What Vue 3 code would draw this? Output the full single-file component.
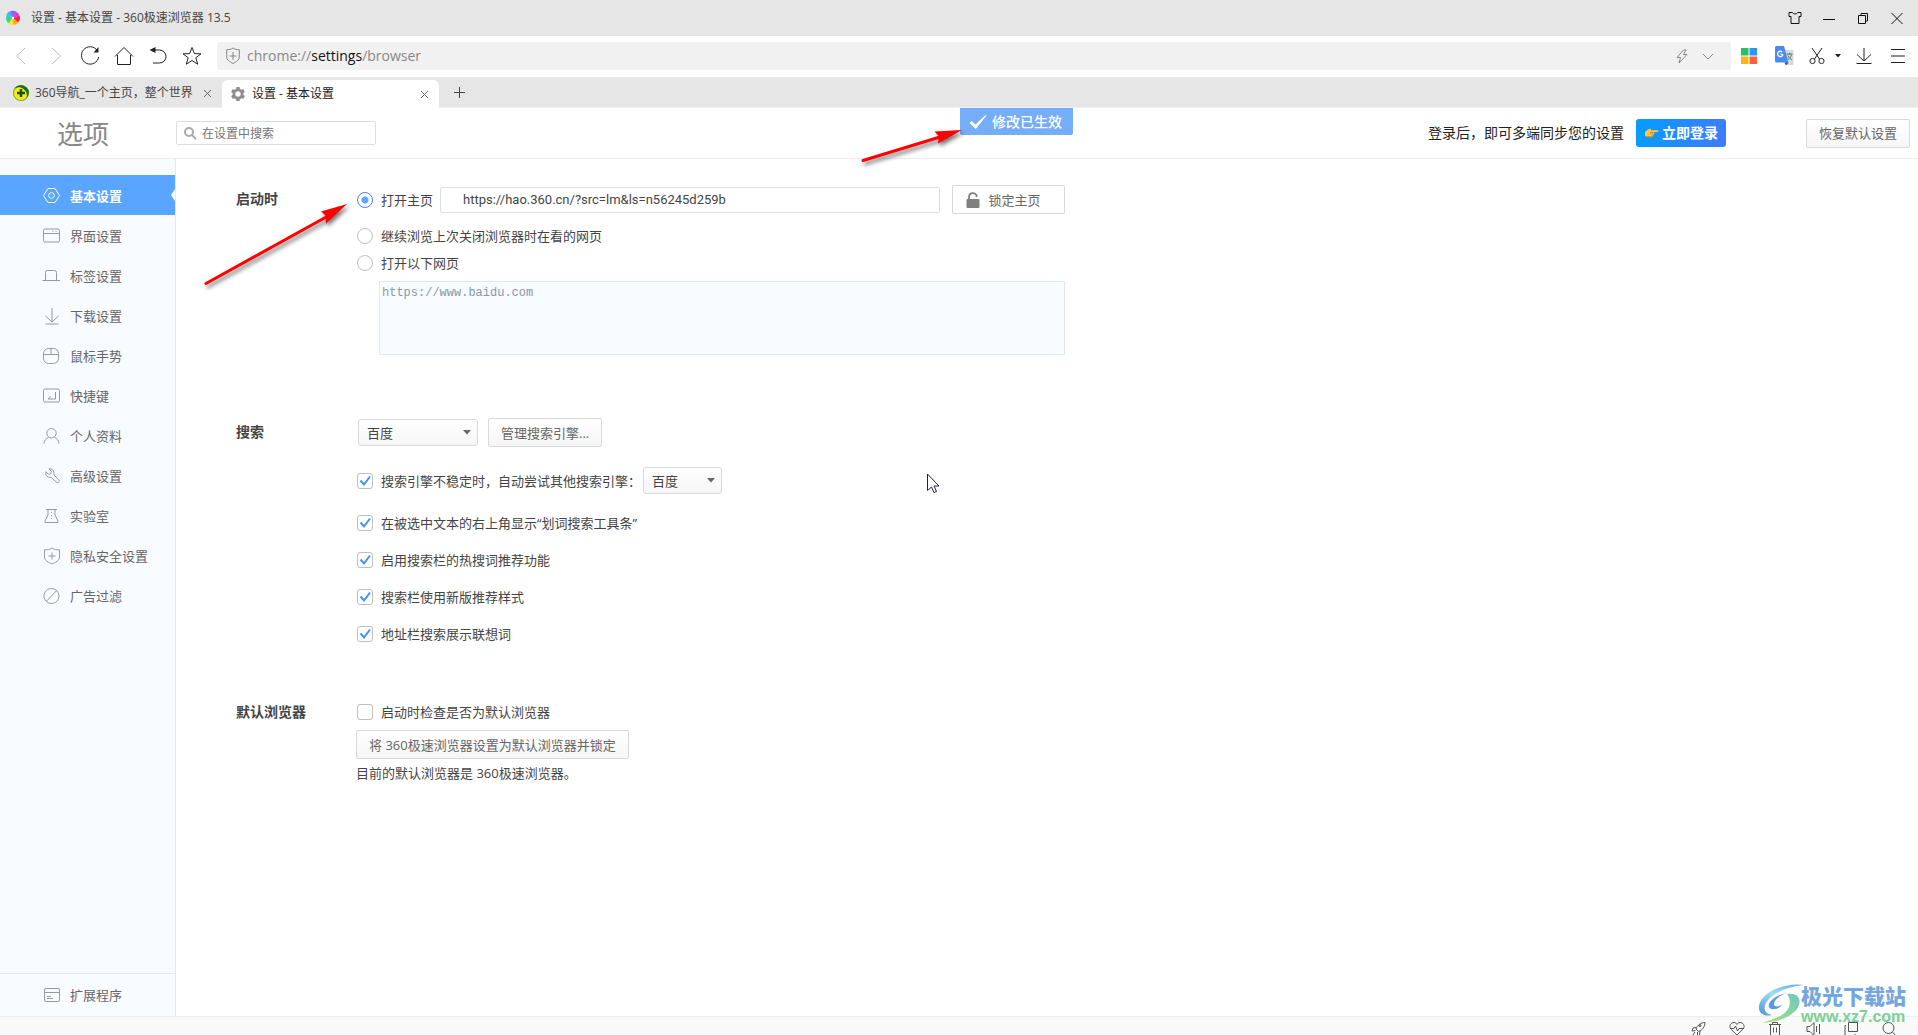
<script setup>
import { ref } from 'vue'

const navItems = [
  { id: 'basic', label: '基本设置', icon: ['M5 1.500h7l4.500 7-4.500 7H5L.5 8.500z', 'M8.500 5.700a2.800 2.800 0 1 0 .01 0z'] },
  { id: 'ui', label: '界面设置', icon: ['M2 2h13a1.500 1.500 0 0 1 1.500 1.500v10a1.500 1.500 0 0 1-1.500 1.500H2A1.500 1.500 0 0 1 .5 13.500v-10A1.500 1.500 0 0 1 2 2z', 'M.5 6.500h16', 'M9.500 4.300h1M12.500 4.300h1'] },
  { id: 'tabs', label: '标签设置', icon: ['M-.5 13.500h17.500', 'M2.500 13.500V5.500a2 2 0 0 1 2-2h7a2 2 0 0 1 2 2v8'] },
  { id: 'download', label: '下载设置', icon: ['M9 1v14', 'M2.500 9L9 15l6.500-6', 'M2.500 17h13'] },
  { id: 'gesture', label: '鼠标手势', icon: ['M5.500 1.500h5a5 5 0 0 1 5 5v5a5 5 0 0 1-5 5h-5a5 5 0 0 1-5-5v-5a5 5 0 0 1 5-5z', 'M.5 7.500h15', 'M8 1.500v6'] },
  { id: 'keys', label: '快捷键', icon: ['M2 2h13a1.500 1.500 0 0 1 1.500 1.500v10a1.500 1.500 0 0 1-1.500 1.500H2A1.500 1.500 0 0 1 .5 13.500v-10A1.500 1.500 0 0 1 2 2z', 'M12.500 5v7H5l3-2.500'] },
  { id: 'profile', label: '个人资料', icon: ['M8.500 1.500a4.700 4.700 0 0 1 0 9.400 4.700 4.700 0 0 1 0-9.400z', 'M1 16.500c0-3 2.500-5.200 4.500-6M16 16.500c0-3-2.500-5.200-4.500-6'] },
  { id: 'advanced', label: '高级设置', icon: ['M6 1.800l2.300 2.500-.5 2.500-2.600.4L3 4.700c-1 2.700.4 5 2.600 5.500 1 .2 1.900.1 2.500.3l5.500 4.800c1.500 1 3.300-.6 2.400-2.100l-4.800-5c-.3-.8 0-1.600-.2-2.700C10.600 2.900 8.500 1.200 6 1.800z'] },
  { id: 'lab', label: '实验室', icon: ['M3 2.500h11M5 2.500v5.500L2 14v1.500h13V14L12 8V2.500', 'M8.500 5v1M8.500 8v1M8.500 11v1'] },
  { id: 'privacy', label: '隐私安全设置', icon: ['M9 1c2 1.500 4.500 2 7.500 1.800V10c0 3.500-4 5.500-7.500 7C5.500 15.500 1.500 13.500 1.500 10V2.800C4.500 3 7 2.500 9 1z', 'M9 5.500v7M5.500 9h7'] },
  { id: 'ads', label: '广告过滤', icon: ['M8.500 1.500a7.500 7.500 0 1 1-.01 0z', 'M3.500 14.300L13.500 3.700'] },
]
const current = ref('basic')

const startup = ref('home')
const homeUrl = ref('https://hao.360.cn/?src=lm&ls=n56245d259b')
const pages = ref('https://www.baidu.com')
const engine = ref('百度')
const fallbackEngine = ref('百度')
const useFallback = ref(true)
const searchOptions = ref([
  { id: 'wordbar', label: '在被选中文本的右上角显示“划词搜索工具条”', on: true },
  { id: 'hot', label: '启用搜索栏的热搜词推荐功能', on: true },
  { id: 'style', label: '搜索栏使用新版推荐样式', on: true },
  { id: 'suggest', label: '地址栏搜索展示联想词', on: true },
])
const checkDefault = ref(false)
</script>

<template>
  <div class="browser">
    <header class="titlebar">
      <svg class="app-logo" width="16" height="16" viewBox="0 0 16 16">
        <path d="M8 8L2 3.500A7 7 0 0 1 6 1z" fill="#4aa8f8" />
        <path d="M8 8L5.500 1.200A7 7 0 0 1 12 2.200z" fill="#a05cf5" />
        <path d="M8 8L11.500 2a7 7 0 0 1 3.500 5z" fill="#e23bd0" />
        <path d="M8 8l7-1.500a7 7 0 0 1-2 6z" fill="#f5252c" />
        <path d="M8 8l5.200 4.500A7 7 0 0 1 8 15z" fill="#ffa51f" />
        <path d="M8 8l.5 7A7 7 0 0 1 3 13z" fill="#f7e52b" />
        <path d="M8 8l-4.700 5.200A7 7 0 0 1 1 8z" fill="#3ed67a" />
        <path d="M8 8H1a7 7 0 0 1 1.500-5z" fill="#36cfd0" />
        <circle cx="8" cy="8" r="1.200" fill="#fff" />
      </svg>
      <span class="window-title">设置 - 基本设置 - 360极速浏览器 13.5</span>
      <div class="window-controls">
        <button aria-label="皮肤">
          <svg width="14" height="14" viewBox="0 0 14 14"><path d="M1 1.500h3.500c.5 2 4.500 2 5 0H13v4h-2v7H3v-7H1z" /></svg>
        </button>
        <button aria-label="最小化">
          <svg width="14" height="14" viewBox="0 0 14 14"><path d="M1 8.500h12" /></svg>
        </button>
        <button aria-label="还原">
          <svg width="14" height="14" viewBox="0 0 14 14"><path d="M2.500 4.500h7v8h-7zM5 4.500v-2h6.500v7.500h-2" /></svg>
        </button>
        <button aria-label="关闭">
          <svg width="14" height="14" viewBox="0 0 14 14"><path d="M1.500 2l11 11M12.500 2l-11 11" /></svg>
        </button>
      </div>
    </header>

    <div class="toolbar">
      <button class="tool faint" aria-label="后退">
        <svg width="20" height="20" viewBox="0 0 20 20"><path d="M13 2L4.500 10 13 18" /></svg>
      </button>
      <button class="tool faint" aria-label="前进">
        <svg width="20" height="20" viewBox="0 0 20 20"><path d="M6 2l8.500 8L6 18" /></svg>
      </button>
      <button class="tool" aria-label="刷新">
        <svg width="20" height="20" viewBox="0 0 20 20"><path d="M17.300 4.500A8.700 8.700 0 1 0 18.700 11" /><path d="M18.500 1v5.500H13.500z" fill="#222" stroke="none" /></svg>
      </button>
      <button class="tool" aria-label="主页">
        <svg width="20" height="20" viewBox="0 0 20 20"><path d="M1 10.500L10 1.500l9 9M3.500 9v9.500h13V9" /></svg>
      </button>
      <button class="tool" aria-label="恢复标签">
        <svg width="20" height="20" viewBox="0 0 20 20"><path d="M4 4h7.500a6.500 6.500 0 0 1 0 13H5" /><path d="M1.500 4l6-3v6z" fill="#222" stroke="none" /></svg>
      </button>
      <button class="tool" aria-label="收藏">
        <svg width="20" height="20" viewBox="0 0 20 20"><path d="M10 1.500l2.400 6.100 6.600.2-5.200 4 1.900 6.400L10 14.500l-5.700 3.700 1.900-6.400-5.200-4 6.600-.2z" /></svg>
      </button>
      <div class="address">
        <svg width="14" height="18" viewBox="0 0 14 18"><path d="M7 1c2 1.500 4 1.800 6.300 1.700V10c0 3-3.300 5-6.300 6.500C4 15 .7 13 .7 10V2.700C3 2.800 5 2.500 7 1zM7 5v8M3.500 9h7" /></svg>
        <div class="url" role="textbox" aria-label="地址栏">chrome://<b>settings</b>/browser</div>
        <button aria-label="极速模式">
          <svg width="14" height="16" viewBox="0 0 14 16"><path d="M8.500 2L2 9.500h3.500L4 15l8-8.500H8.500L11 2z" /></svg>
        </button>
        <button aria-label="展开">
          <svg width="14" height="16" viewBox="0 0 14 16"><path d="M2 6l5 5 5-5" /></svg>
        </button>
      </div>
      <button class="tool wide" aria-label="应用">
        <svg class="flat" width="16" height="16" viewBox="0 0 16 16">
          <path d="M0 0h7.500v7.500H0z" fill="#2bbf63" /><path d="M8.500 0H16v7.500H8.500z" fill="#2b96f5" />
          <path d="M0 8.500h7.500V16H0z" fill="#ffb21a" /><path d="M8.500 8.500H16V16H8.500z" fill="#fd6140" />
        </svg>
      </button>
      <button class="tool wide" aria-label="翻译">
        <svg class="flat" width="20" height="20" viewBox="0 0 20 20">
          <path d="M7 4h11.500v15H11z" fill="#dadada" />
          <path d="M1.500 0H9l4.500 16.500h-12A1.500 1.500 0 0 1 0 15V1.500A1.500 1.500 0 0 1 1.500 0z" fill="#4a8af4" />
          <path d="M9.500 16.500h4L11 19.500z" fill="#2a45b5" />
          <path d="M8 8.300H5.500M8 8.300A2.700 2.700 0 1 1 7.200 6" fill="none" stroke="#fff" stroke-width="1.300" />
          <path d="M11.500 8h6M14.500 7v1.500M16.500 8.500c-.5 2.500-2 4-3.500 5M13 9.500c.8 2 2.200 3.300 4 4.300" fill="none" stroke="#557584" />
        </svg>
      </button>
      <button class="tool snip" aria-label="截图">
        <svg width="16" height="18" viewBox="0 0 16 18"><path d="M3 1l7.500 11M13 1L5.500 12" /><circle cx="3.500" cy="14" r="2.600" /><circle cx="12.500" cy="14" r="2.600" /></svg>
        <svg class="flat" width="6" height="4" viewBox="0 0 6 4"><path d="M0 0h6L3 3.500z" /></svg>
      </button>
      <button class="tool" aria-label="下载">
        <svg width="16" height="18" viewBox="0 0 16 18"><path d="M8 1v13M1 7.500L8 14l7-6.500M.5 16.500h15" /></svg>
      </button>
      <button class="tool" aria-label="菜单">
        <svg width="14" height="14" viewBox="0 0 14 14"><path d="M0 .5h14M0 7h14M0 13.500h14" /></svg>
      </button>
    </div>

    <nav class="tabs" aria-label="标签页">
      <div class="tab">
        <svg width="16" height="16" viewBox="0 0 16 16">
          <circle cx="8" cy="8" r="8" fill="#5fb526" /><path d="M8 1.500C13 .8 15.500 4 15 9.500c-.5 2.500-3 5-6 5.500C4 15.500 1 12 1 8c0-4 3-6 7-6.500z" fill="#fce70e" />
          <path d="M2 3C5-1 12-1 15.500 5c.5 3 0 6-2 8 1-4 0-7-3-9C8 2 5 2 2 3z" fill="#176c18" /><path d="M8 4v8M4 8h8" stroke="#14521a" stroke-width="2.500" />
        </svg>
        <span class="tab-title">360导航_一个主页，整个世界</span>
        <button class="tab-close" aria-label="关闭标签"><svg width="9" height="9" viewBox="0 0 9 9"><path d="M1 1l7 7M8 1L1 8" /></svg></button>
      </div>
      <div class="tab active">
        <svg width="16" height="16" viewBox="0 0 16 16"><g fill="#8d8d8d"><path d="M6.300 1h3.400v14H6.300z" /><path d="M6.300 1h3.400v14H6.300z" transform="rotate(60 8 8)" /><path d="M6.300 1h3.400v14H6.300z" transform="rotate(120 8 8)" /><circle cx="8" cy="8" r="5.500" /></g><circle cx="8" cy="8" r="2.700" fill="#fff" /></svg>
        <span class="tab-title">设置 - 基本设置</span>
        <button class="tab-close" aria-label="关闭标签"><svg width="9" height="9" viewBox="0 0 9 9"><path d="M1 1l7 7M8 1L1 8" /></svg></button>
      </div>
      <button class="tab-new" aria-label="新标签"><svg width="11" height="11" viewBox="0 0 11 11"><path d="M5.500 0v11M0 5.500h11" /></svg></button>
    </nav>

    <div class="page-head">
      <h1>选项</h1>
      <label class="search">
        <svg width="13" height="13" viewBox="0 0 13 13"><circle cx="5" cy="5" r="4" /><path d="M8 8l4 4" /></svg>
        <input type="text" placeholder="在设置中搜索" aria-label="在设置中搜索">
      </label>
      <div class="toast" role="status">
        <svg width="18" height="16" viewBox="0 0 18 16"><path d="M.5 9L2.500 7l4 3.500L16.500 1l1 .5L6.800 15z" /></svg>
        <span>修改已生效</span>
      </div>
      <span class="sync-note">登录后，即可多端同步您的设置</span>
      <button class="login">
        <svg width="15" height="10" viewBox="0 0 15 10"><path d="M1 4C3 2.500 4 1 6 .8c1 0 1.500.7 1 1.400h6.600c1.400 0 1.400 1.900 0 1.900H10c.6.600.400 1.500-.4 1.700.3.700 0 1.400-.8 1.600 0 .8-.4 1.400-1.200 1.400H3.500L1 8z" fill="#ffc73a" /><path d="M1 8l2.500.8h4c.8 0 1.200-.6 1.200-1.400M6 4.500h3.500M6 6h3" fill="none" stroke="#d98a1a" /></svg>
        <span>立即登录</span>
      </button>
      <button class="btn reset">恢复默认设置</button>
    </div>

    <div class="page">
      <aside class="sidebar">
        <nav class="menu" aria-label="设置">
          <a v-for="item in navItems" :key="item.id" href="#" :class="{ current: item.id === current }" @click.prevent="current = item.id">
            <svg width="18" height="18" viewBox="0 0 18 18"><path v-for="d in item.icon" :key="d" :d="d" /></svg>
            <span>{{ item.label }}</span>
          </a>
        </nav>
        <a class="extensions" href="#">
          <svg width="18" height="18" viewBox="0 0 18 18"><path d="M3 2.500h12a1.500 1.500 0 0 1 1.500 1.500v10a1.500 1.500 0 0 1-1.500 1.500H3A1.500 1.500 0 0 1 1.500 14V4A1.500 1.500 0 0 1 3 2.500zM1.500 6.500h15M4 10.500h4M4 12.500h6" /></svg>
          <span>扩展程序</span>
        </a>
      </aside>

      <main class="content">
        <section>
          <h2>启动时</h2>
          <div class="fields">
            <div class="row home-row">
              <label class="choice"><input v-model="startup" type="radio" name="startup" value="home"><span>打开主页</span></label>
              <input v-model="homeUrl" class="home-url" type="text" aria-label="主页地址">
              <button class="lock">
                <svg width="14" height="16" viewBox="0 0 14 16"><path d="M1.500 7h11a1 1 0 0 1 1 1v7a1 1 0 0 1-1 1h-11a1 1 0 0 1-1-1V8a1 1 0 0 1 1-1z" fill="#808080" /><path d="M3 8V5a4 4 0 0 1 7.600-1.600V5" fill="none" stroke="#808080" stroke-width="1.800" /></svg>
                <span>锁定主页</span>
              </button>
            </div>
            <div class="row"><label class="choice"><input v-model="startup" type="radio" name="startup" value="continue"><span>继续浏览上次关闭浏览器时在看的网页</span></label></div>
            <div class="row"><label class="choice"><input v-model="startup" type="radio" name="startup" value="pages"><span>打开以下网页</span></label></div>
            <textarea v-model="pages" aria-label="打开以下网页" spellcheck="false"></textarea>
          </div>
        </section>

        <section class="search-section">
          <h2>搜索</h2>
          <div class="fields">
            <div class="row engine-row">
              <select v-model="engine" class="engine" aria-label="搜索引擎"><option>百度</option></select>
              <button class="btn">管理搜索引擎...</button>
            </div>
            <div class="row fallback-row">
              <label class="choice"><input v-model="useFallback" type="checkbox"><span>搜索引擎不稳定时，自动尝试其他搜索引擎：</span></label>
              <select v-model="fallbackEngine" class="fallback" aria-label="备用搜索引擎"><option>百度</option></select>
            </div>
            <div v-for="o in searchOptions" :key="o.id" class="row option-row">
              <label class="choice"><input v-model="o.on" type="checkbox"><span>{{ o.label }}</span></label>
            </div>
          </div>
        </section>

        <section class="default-section">
          <h2>默认浏览器</h2>
          <div class="fields">
            <div class="row"><label class="choice"><input v-model="checkDefault" type="checkbox"><span>启动时检查是否为默认浏览器</span></label></div>
            <button class="btn set-default">将 360极速浏览器设置为默认浏览器并锁定</button>
            <p>目前的默认浏览器是 360极速浏览器。</p>
          </div>
        </section>
      </main>
    </div>

    <footer class="statusbar">
      <button aria-label="加速"><svg width="16" height="16" viewBox="0 0 16 16"><path d="M5 8c1.500-4 5-6.500 9-6.500 0 4-2.500 7.500-6.500 9zM5.500 6.500L2 7l-1 3 3.500-.5M9 10l-.5 4-2 1v-4M9 5.500a1 1 0 1 1 .01 0M4 11l-3 4" /></svg></button>
      <button aria-label="医生"><svg width="16" height="16" viewBox="0 0 16 16"><path d="M8 14L1.800 8C-.5 5 2 1.500 5 1.500c1.500 0 2.500.8 3 2 .5-1.200 1.500-2 3-2 3 0 5.500 3.500 3.200 6.500zM1.500 7.500H5L6.500 5l2 5 1.500-2.500h4.500" /></svg></button>
      <button aria-label="清理"><svg width="16" height="16" viewBox="0 0 16 16"><path d="M2 3.500h12M5.500 3.500v-2h5v2M3.500 3.500v11h9v-11M6.500 6.500v5M9.500 6.500v5" /></svg></button>
      <button aria-label="静音"><svg width="16" height="16" viewBox="0 0 16 16"><path d="M2 5.500h3l4-4v13l-4-4H2zM11.500 5v6M14.500 3v10" /></svg></button>
      <button aria-label="小窗"><svg width="16" height="16" viewBox="0 0 16 16"><path d="M5.500 1.500h9v9h-9zM3 4.500H2v10h10v-1.500" /></svg></button>
      <button aria-label="缩放"><svg width="16" height="16" viewBox="0 0 16 16"><circle cx="7.500" cy="7" r="5.500" /><path d="M11.500 11l3 3.500" /></svg></button>
    </footer>

    <div class="watermark">
      <svg width="48" height="42" viewBox="0 0 48 42">
        <defs>
          <linearGradient id="wm-blue" x1="1" y1="0" x2="0" y2="1"><stop offset="0" stop-color="#5aa9ea" /><stop offset=".5" stop-color="#a4dbf2" /><stop offset="1" stop-color="#4f93d8" /></linearGradient>
          <linearGradient id="wm-green" x1="1" y1="0" x2="0" y2="1"><stop offset="0" stop-color="#69c9bd" /><stop offset="1" stop-color="#b2de7c" /></linearGradient>
        </defs>
        <path d="M46 2C27-1 3 9 1 23c-1 7 5 11 13 9-7-1-9-6-6-12C13 11 27 4 46 2z" fill="url(#wm-blue)" />
        <path d="M29 10C18 12 9 19 11 24c2 4 10 2 13-2-4 2-8 2-8-1 0-4 6-9 13-11z" fill="#5b9bdc" />
        <path d="M29 11c11-2 16 6 10 15-6 8-19 13-35 14 12-4 22-7 26-14 3-6 2-11-1-15z" fill="url(#wm-green)" />
      </svg>
      <div class="watermark-text"><strong>极光下载站</strong><span>www.xz7.com</span></div>
    </div>

    <svg class="callouts" width="1000" height="520" viewBox="0 0 1000 520" aria-hidden="true">
      <g class="arrow">
        <path d="M206 283.500L328 216" /><path class="tip" d="M347 204L321 211.500l4.500 4L326 223.500z" />
        <path d="M863 160.500L940 137" /><path class="tip" d="M962 130l-27.500 1.500 4.500 5-1 7z" />
      </g>
      <path class="pointer" d="M927.500 474v16.500l4-3.500 2.500 5.500 2.500-1-2.500-5.500h5z" />
    </svg>
  </div>
</template>

<style>
body {
  margin: 0;
}
</style>

<style scoped>
.browser {
  position: relative;
  display: flex;
  flex-direction: column;
  height: 100vh;
  overflow: hidden;
  background: #fff;
  color: #444;
  font: 13px/20px "Open Sans", "Noto Sans CJK SC", sans-serif;
}
button, input, select, textarea {
  box-sizing: border-box;
  margin: 0;
  padding: 0;
  font: inherit;
  color: inherit;
}
button {
  display: flex;
  align-items: center;
  justify-content: center;
  border: 0;
  background: none;
  white-space: nowrap;
}
svg {
  display: block;
  flex: none;
  overflow: visible;
  fill: none;
  stroke: currentColor;
}
svg.flat, .app-logo, .tab > svg, .login svg, .lock svg, .toast svg, .watermark svg {
  stroke: none;
}
svg.flat {
  fill: currentColor;
}
a {
  color: inherit;
  text-decoration: none;
}

.titlebar {
  display: flex;
  align-items: center;
  flex: none;
  height: 36px;
  padding: 0 4px 0 5px;
  background: #e6e6e6;
  font-size: 12px;
}
.window-title {
  margin-left: 10px;
}
.window-controls {
  display: flex;
  margin-left: auto;
  color: #111;
}
.window-controls button {
  width: 34px;
  height: 34px;
}

.toolbar {
  display: flex;
  align-items: center;
  box-sizing: border-box;
  flex: none;
  height: 41px;
  padding: 0 3px 2px 5px;
}
.tool {
  width: 34px;
  height: 34px;
  color: #222;
}
.tool.faint {
  color: #b8b8b8;
}
.tool.wide {
  width: 36px;
}
.tool.snip {
  gap: 10px;
  width: 44px;
}
.address {
  display: flex;
  align-items: center;
  flex: 1;
  height: 28px;
  margin: 0 0 0 8px;
  padding: 0 10px 0 9px;
  border-radius: 2px;
  background: #f1f1f1;
  color: #888;
}
.url {
  flex: 1;
  margin-left: 7px;
  font: 14px/28px "Open Sans", sans-serif;
}
.url b {
  color: #111;
  font-weight: 400;
}
.address button {
  width: 26px;
  height: 28px;
}

.tabs {
  display: flex;
  align-items: flex-end;
  flex: none;
  height: 30px;
  border-bottom: 1px solid #f0f0f0;
  background: #e6e6e6;
  font-size: 12px;
}
.tab {
  display: flex;
  align-items: center;
  box-sizing: border-box;
  width: 222px;
  height: 28px;
  padding: 0 8px 0 13px;
}
.tab.active {
  width: 217px;
  margin-bottom: -1px;
  padding: 0 8px;
  border-radius: 6px 6px 0 0;
  background: #fff;
  color: #222;
}
.tab-title {
  flex: 1;
  margin-left: 6px;
  white-space: nowrap;
}
.tab-close {
  width: 14px;
  height: 20px;
  color: #666;
}
.tab-new {
  width: 41px;
  height: 29px;
}

.page-head {
  position: relative;
  display: flex;
  align-items: center;
  box-sizing: border-box;
  flex: none;
  height: 51px;
  padding: 0 8px 0 57px;
  border-bottom: 1px solid #e9ebee;
}
h1 {
  width: 119px;
  margin: 2px 0 0;
  color: #888;
  font-size: 26px;
  font-weight: 400;
  line-height: 40px;
}
.search {
  display: flex;
  align-items: center;
  box-sizing: border-box;
  width: 200px;
  height: 24px;
  padding: 1px 7px 0;
  gap: 5px;
  border: 1px solid #dcdcdc;
  border-radius: 2px;
  color: #aaa;
  font-size: 12px;
}
.search svg {
  stroke-width: 2;
}
.search input {
  flex: 1;
  min-width: 0;
  border: 0;
  outline: 0;
}
.search input::placeholder {
  color: #757575;
  opacity: 1;
}
.toast {
  position: absolute;
  top: 0;
  left: 50%;
  display: flex;
  align-items: center;
  gap: 5px;
  height: 27px;
  margin-left: 1px;
  padding: 0 11px 0 9px;
  border-radius: 0 0 2px 2px;
  background: #75adf9;
  color: #fff;
  font-size: 14px;
  font-weight: 500;
}
.toast svg {
  fill: #fff;
}
.sync-note {
  margin-left: auto;
  color: #222;
  font-size: 14px;
}
.login {
  gap: 3px;
  width: 90px;
  height: 28px;
  margin: 0 80px 0 12px;
  border-radius: 3px;
  background: linear-gradient(100deg, #039dff, #3f7bff);
  color: #fff;
  font-size: 14px;
  font-weight: 700;
}
.btn {
  height: 29px;
  padding: 0 12px;
  border: 1px solid #d9d9d9;
  border-radius: 2px;
  background: linear-gradient(#fff, #f6f6f6);
  color: #666;
}

.page {
  display: flex;
  flex: 1;
  min-height: 0;
}
.sidebar {
  display: flex;
  flex-direction: column;
  justify-content: space-between;
  flex: none;
  width: 175px;
  border-right: 1px solid #e3e8f0;
  background: #f8fbff;
  color: #666;
}
.sidebar svg {
  color: #999;
}
.menu {
  padding-top: 16px;
}
.menu a, .extensions {
  display: flex;
  align-items: center;
  box-sizing: border-box;
  gap: 9px;
  height: 40px;
  padding: 2px 0 0 43px;
}
.menu a.current {
  position: relative;
  background: #59a5ff;
  color: #fff;
  font-weight: 700;
}
.menu a.current svg {
  color: #fff;
}
.menu a.current::after {
  content: "";
  position: absolute;
  top: 14px;
  right: 0;
  border: solid transparent;
  border-width: 6px 4px 6px 0;
  border-right-color: #fff;
}
.extensions {
  height: 43px;
  padding-top: 0;
  border-top: 1px solid #e3e8f0;
}

.content {
  flex: 1;
  padding: 26px 60px 0;
}
section {
  display: flex;
  max-width: 829px;
}
h2 {
  flex: none;
  width: 120px;
  margin: 0;
  font-size: 14px;
  font-weight: 700;
  line-height: 28px;
}
.fields {
  flex: 1;
}
.row {
  display: flex;
  align-items: center;
  height: 27px;
  padding-left: 1px;
}
.home-row {
  height: 29px;
  margin-bottom: 8px;
}
.choice {
  display: flex;
  align-items: center;
  gap: 8px;
  white-space: nowrap;
}
.choice input {
  appearance: none;
  width: 16px;
  height: 16px;
  border: 1px solid #bfbfbf;
  border-radius: 3px;
  background: #fff center no-repeat;
}
.choice input[type="radio"] {
  border-radius: 50%;
}
.choice input[type="radio"]:checked {
  border-color: #4a85ee;
  background-image: radial-gradient(circle, #5ba6ff 3px, transparent 4px);
}
.choice input[type="checkbox"]:checked {
  background-image: url("data:image/svg+xml,%3Csvg xmlns='http://www.w3.org/2000/svg' width='14' height='14'%3E%3Cpath d='M2.500 6.500l3.500 4 6-8' fill='none' stroke='%233d94ff' stroke-width='2'/%3E%3C/svg%3E");
}
.home-url {
  flex: 1;
  min-width: 0;
  height: 26px;
  margin: 0 12px 0 7px;
  padding: 0 22px;
  border: 1px solid #dedede;
  border-radius: 2px;
  font-family: Roboto, sans-serif;
}
.lock {
  gap: 8px;
  width: 113px;
  height: 29px;
  padding-right: 10px;
  border: 1px solid #d9d9d9;
  border-radius: 2px;
  color: #666;
}
textarea {
  display: block;
  width: calc(100% - 23px);
  height: 74px;
  margin: 5px 0 0 23px;
  padding: 2px 2px 0;
  border: 1px solid #e1e6ef;
  background: #f8fbff;
  color: #8798a8;
  font: 12px/18px "Liberation Mono", monospace;
  resize: none;
}
.search-section {
  margin-top: 63px;
}
.engine-row {
  gap: 10px;
  height: 29px;
  margin-bottom: 20px;
  padding-left: 2px;
}
select {
  appearance: none;
  height: 27px;
  padding: 0 8px;
  border: 1px solid #d9d9d9;
  border-radius: 3px;
  background:
    url("data:image/svg+xml,%3Csvg xmlns='http://www.w3.org/2000/svg' width='8' height='5'%3E%3Cpath d='M0 0h8L4 4.500z' fill='%23666'/%3E%3C/svg%3E") right 6px center no-repeat,
    linear-gradient(#fff, #f6f6f6);
}
.engine {
  width: 120px;
}
.fallback {
  width: 79px;
}
.fallback-row {
  gap: 2px;
  margin-bottom: 10px;
}
.option-row {
  height: 37px;
}
.default-section {
  margin-top: 46px;
}
.set-default {
  margin-top: 5px;
}
p {
  margin: 4px 0 0;
}

.statusbar {
  display: flex;
  justify-content: flex-end;
  box-sizing: border-box;
  flex: none;
  height: 19px;
  padding: 4px 10px 0 0;
  border-top: 1px solid #ededed;
  background: #f9f9f9;
  color: #555;
}
.statusbar button {
  align-items: flex-start;
  width: 38px;
}

.watermark {
  position: absolute;
  right: 12px;
  bottom: 8px;
  display: flex;
  pointer-events: none;
}
.watermark-text {
  margin-left: -5px;
  color: #74a7dd;
  font: 700 21px/24px "Noto Sans CJK SC", sans-serif;
}
.watermark-text strong, .watermark-text span {
  display: block;
}
.watermark-text span {
  color: #7ccf95;
  font: 700 16px/20px "Liberation Sans", sans-serif;
}
.callouts {
  position: absolute;
  top: 0;
  left: 0;
  pointer-events: none;
}
.arrow {
  stroke: #f00;
  stroke-width: 3;
  stroke-linecap: round;
  filter: drop-shadow(2px 3px 2px rgba(0, 0, 0, .55));
}
.arrow .tip {
  fill: #f00;
  stroke: none;
}
.pointer {
  fill: #fff;
  stroke: #223;
}
</style>
